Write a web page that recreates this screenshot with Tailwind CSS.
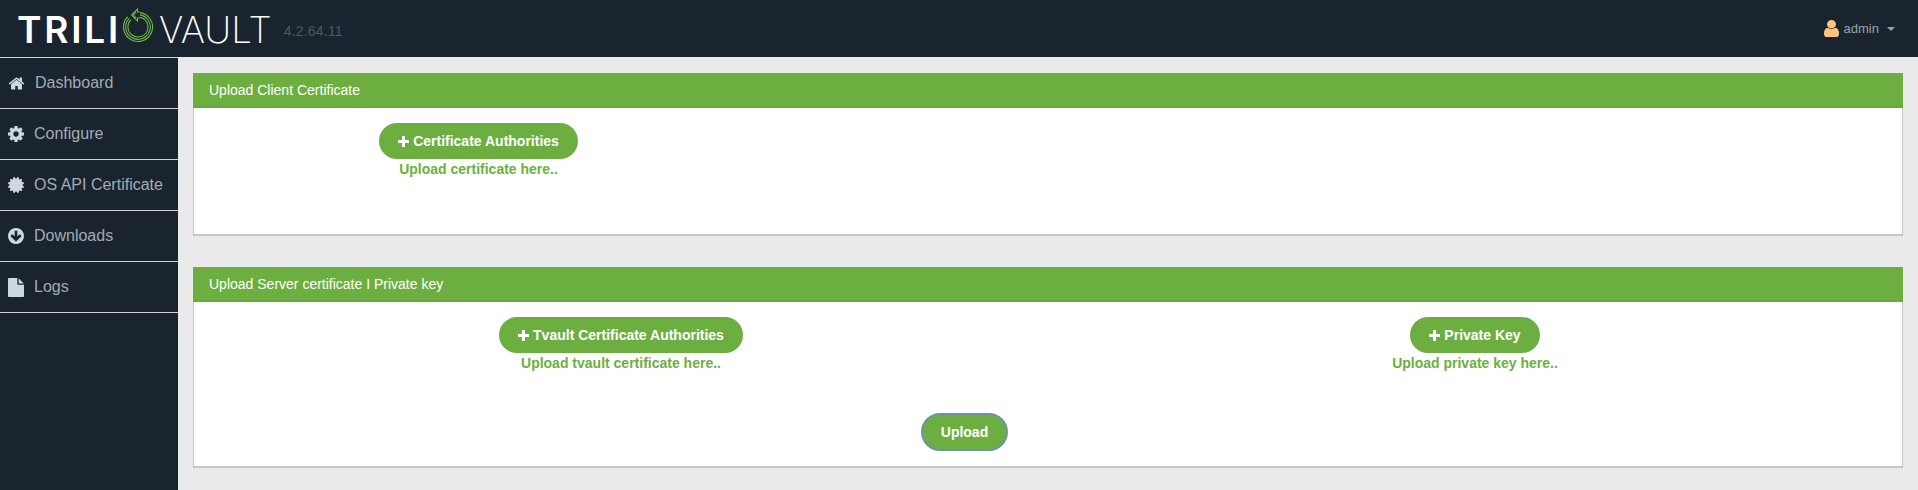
<!DOCTYPE html>
<html lang="en">
  <head>
    <meta charset="UTF-8" />
    <title>TrilioVault</title>
    <script src="https://cdn.jsdelivr.net/npm/@tailwindcss/browser@4"></script>
  </head>
  <body class="bg-[#eaeaea] font-['Liberation_Sans',sans-serif]">
    <div class="flex flex-col h-[490px] overflow-hidden">
      <!-- top bar -->
      <header class="h-[57px] shrink-0 bg-[#19242f] flex items-center justify-between pl-[17px] pr-[23px]">
        <div class="flex items-center">
          <span class="w-[101px] font-['Inter',sans-serif] font-semibold text-[37px] leading-none text-white tracking-[2.800px] mt-[1px] whitespace-nowrap">TRILI</span>
          <svg class="w-[36px] h-[38px] ml-[3px] mb-[7px]" viewBox="0 0 36 38" fill="none" stroke="#72b845" stroke-width="1.100">
            <path d="M19 6.600A14.500 14.500 0 1 1 6.750 10.750" />
            <path d="M19 8.900A12.300 12.300 0 1 1 8.300 12.300" />
            <path d="M19 11.200A10 10 0 1 1 9.900 13.900" />
            <path d="M19 6H16.500V3L10.500 9L16.500 15V12H19" />
            <path d="M15 6L12.500 9L15 12" />
          </svg>
          <span class="font-['Inter',sans-serif] font-extralight text-[37px] leading-none text-white ml-[2px] mt-[1px]">VAULT</span>
          <span class="text-[14px] text-[#465b5f] tracking-[0.2px] ml-[12px] mt-[5px]">4.2.64.11</span>
        </div>
        <div class="flex items-center text-[13px] text-[#9aa3aa]">
          <svg class="w-[15px] h-[17px] mr-[5px]" viewBox="256 128 1280 1536" preserveAspectRatio="none" fill="#fdc47e">
            <path d="M1536 1399q0 109-62.500 187t-150.500 78h-854q-88 0-150.500-78t-62.500-187q0-85 8.500-160.500t31.500-152 58.500-131 94-89 134.500-34.500q131 128 313 128t313-128q76 0 134.500 34.500t94 89 58.500 131 31.500 152 8.500 160.500zm-256-887q0 159-112.500 271.500t-271.500 112.500-271.500-112.500-112.500-271.500 112.500-271.500 271.500-112.500 271.500 112.500 112.500 271.500z" />
          </svg>
          <span>admin</span>
          <span class="ml-[8px] w-0 h-0 border-x-[4px] border-x-transparent border-t-[4px] border-t-[#9aa3aa]"></span>
        </div>
      </header>

      <div class="flex flex-1 min-h-0">
        <!-- sidebar -->
        <nav class="w-[178px] shrink-0 bg-[#19242f] text-[16px] text-[#a3acb3]">
          <div class="h-[52px] border-y border-[#d3d6d8] flex items-center pl-[8px]">
            <svg class="w-[17px] h-[17px] fill-[#cfd8e0]" viewBox="0 0 1792 1792">
              <path d="M1472 992v480q0 26-19 45t-45 19h-384v-384h-256v384h-384q-26 0-45-19t-19-45v-480q0-1 .5-3t.5-3l575-474 575 474q1 2 1 6zm223-69l-62 74q-8 9-21 11h-3q-13 0-21-7l-692-577-692 577q-12 8-24 7-13-2-21-11l-62-74q-8-10-7-23.500t11-21.500l719-599q32-26 76-26t76 26l244 204v-195q0-14 9-23t23-9h192q14 0 23 9t9 23v408l219 182q10 8 11 21.500t-7 23.500z" />
            </svg>
            <span class="ml-[10px]">Dashboard</span>
          </div>
          <div class="h-[51px] border-b border-[#d3d6d8] flex items-center pl-[8px]">
            <svg class="w-[16px] h-[16px] fill-[#cfd8e0]" viewBox="128 128 1536 1536">
              <path d="M1152 896q0-106-75-181t-181-75-181 75-75 181 75 181 181 75 181-75 75-181zm512-109v222q0 12-8 23t-20 13l-185 28q-19 54-39 91 35 50 107 138 10 12 10 25t-9 23q-27 37-99 108t-94 71q-12 0-26-9l-138-108q-44 23-91 38-16 136-29 186-7 28-36 28h-222q-14 0-24.500-8.500t-11.500-21.500l-28-184q-49-16-90-37l-141 107q-10 9-25 9-14 0-25-11-126-114-165-168-7-10-7-23 0-12 8-23 15-21 51-66.500t54-70.500q-27-50-41-99l-183-27q-13-2-21-12.500t-8-23.500v-222q0-12 8-23t19-13l186-28q14-46 39-92-40-57-107-138-10-12-10-24 0-10 9-23 26-36 98.500-107.500t94.500-71.500q13 0 26 10l138 107q44-23 91-38 16-136 29-186 7-28 36-28h222q14 0 24.500 8.500t11.500 21.500l28 184q49 16 90 37l142-107q9-9 24-9 13 0 25 10 129 119 165 170 7 8 7 22 0 12-8 23-15 21-51 66.500t-54 70.500q26 50 41 98l183 28q13 2 21 12.500t8 23.500z" />
            </svg>
            <span class="ml-[10px]">Configure</span>
          </div>
          <div class="h-[51px] border-b border-[#d3d6d8] flex items-center pl-[8px]">
            <svg class="w-[16px] h-[16px] fill-[#cfd8e0]" viewBox="128 128 1536 1536">
              <path d="M1504 896l138 135q30 28 20 70-12 41-52 51l-188 48 53 186q12 41-19 70-29 31-70 19l-186-53-48 188q-10 40-51 52-12 2-19 2-31 0-51-22l-135-138-135 138q-28 30-70 20-41-11-51-52l-48-188-186 53q-41 12-70-19-31-29-19-70l53-186-188-48q-40-10-52-51-10-42 20-70l138-135-138-135q-30-28-20-70 12-41 52-51l188-48-53-186q-12-41 19-70 29-31 70-19l186 53 48-188q10-41 51-51 41-12 70 19l135 139 135-139q29-30 70-19 41 10 51 51l48 188 186-53q41-12 70 19 31 29 19 70l-53 186 188 48q40 10 52 51 10 42-20 70z" />
            </svg>
            <span class="ml-[10px]">OS API Certificate</span>
          </div>
          <div class="h-[51px] border-b border-[#d3d6d8] flex items-center pl-[8px]">
            <svg class="w-[16px] h-[16px] fill-[#cfd8e0]" viewBox="128 128 1536 1536">
              <path d="M1412 897q0-27-18-45l-91-91q-18-18-45-18t-45 18l-189 189v-502q0-26-19-45t-45-19h-128q-26 0-45 19t-19 45v502l-189-189q-19-19-45-19t-45 19l-91 91q-18 18-18 45t18 45l362 362 91 91q18 18 45 18t45-18l91-91 362-362q18-18 18-45zm252-1q0 209-103 385.500t-279.500 279.500-385.500 103-385.500-103-279.500-279.500-103-385.500 103-385.500 279.500-279.500 385.500-103 385.500 103 279.500 279.500 103 385.500z" />
            </svg>
            <span class="ml-[10px]">Downloads</span>
          </div>
          <div class="h-[51px] border-b border-[#d3d6d8] flex items-center pl-[8px]">
            <svg class="w-[16px] h-[19px] fill-[#cfd8e0]" viewBox="128 0 1536 1792" preserveAspectRatio="none">
              <path d="M1152 512v-472q22 14 36 28l408 408q14 14 28 36h-472zm-128 32q0 40 28 68t68 28h544v1056q0 40-28 68t-68 28h-1344q-40 0-68-28t-28-68v-1600q0-40 28-68t68-28h800v544z" />
            </svg>
            <span class="ml-[10px]">Logs</span>
          </div>
        </nav>

        <!-- main -->
        <main class="flex-1 min-w-0 pt-[16px] pl-[15px] pr-[15px]">
          <section class="h-[163px] bg-white border-x border-b-2 border-[#c6c6c6]">
            <h2 class="h-[35px] -mx-px bg-[#6caf40] border-b-2 border-[#67a93c] flex items-center pl-[16px] pt-[1px] text-[14px] text-white">Upload Client Certificate</h2>
            <div class="flex pt-[15px]">
              <div class="w-[569px] flex flex-col items-center">
                <button class="h-[36px] px-[19px] rounded-full bg-[#6caf40] flex items-center text-[14px] font-bold text-white">
                  <svg class="w-[11px] h-[11px] mr-[4px] fill-white" viewBox="0 0 11 11"><path d="M4 0h3v4h4v3H7v4H4V7H0V4h4z" /></svg>Certificate Authorities
                </button>
                <span class="text-[14px] leading-[20px] font-bold text-[#6caf40]">Upload certificate here..</span>
              </div>
            </div>
          </section>

          <section class="mt-[31px] h-[201px] bg-white border-x border-b-2 border-[#c6c6c6]">
            <h2 class="h-[35px] -mx-px bg-[#6caf40] border-b-2 border-[#67a93c] flex items-center pl-[16px] pt-[1px] text-[14px] text-white">Upload Server certificate I Private key</h2>
            <div class="flex pt-[15px]">
              <div class="w-[854px] flex flex-col items-center">
                <button class="h-[36px] px-[19px] rounded-full bg-[#6caf40] flex items-center text-[14px] font-bold text-white">
                  <svg class="w-[11px] h-[11px] mr-[4px] fill-white" viewBox="0 0 11 11"><path d="M4 0h3v4h4v3H7v4H4V7H0V4h4z" /></svg>Tvault Certificate Authorities
                </button>
                <span class="text-[14px] leading-[20px] font-bold text-[#6caf40]">Upload tvault certificate here..</span>
              </div>
              <div class="w-[854px] flex flex-col items-center">
                <button class="h-[36px] px-[19px] rounded-full bg-[#6caf40] flex items-center text-[14px] font-bold text-white">
                  <svg class="w-[11px] h-[11px] mr-[4px] fill-white" viewBox="0 0 11 11"><path d="M4 0h3v4h4v3H7v4H4V7H0V4h4z" /></svg>Private Key
                </button>
                <span class="text-[14px] leading-[20px] font-bold text-[#6caf40]">Upload private key here..</span>
              </div>
            </div>
            <div class="pt-[40px] pl-[727px]">
              <button class="h-[38px] w-[87px] rounded-full bg-[#6caf40] border-2 border-[#6f93a6] text-[14px] font-bold text-white">Upload</button>
            </div>
          </section>
        </main>
      </div>
    </div>
  </body>
</html>
